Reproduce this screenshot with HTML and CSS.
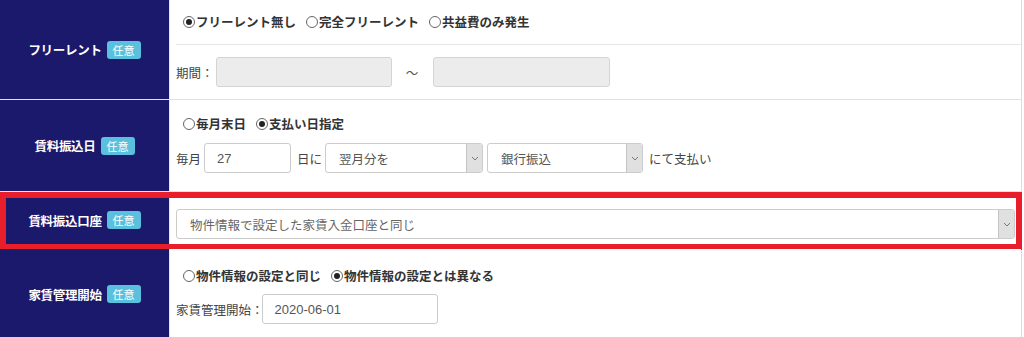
FILE: index.html
```html
<!DOCTYPE html>
<html lang="ja">
<head>
<meta charset="utf-8">
<link rel="stylesheet" href="styles.css">
</head>
<body>
<div class="form">
  <div class="row r1">
    <div class="label"><span class="ltext">フリーレント</span><span class="badge">任意</span></div>
    <div class="content">
      <div class="sub sub-radio">
        <div class="radios">
          <span class="radio"><i class="dot checked"></i>フリーレント無し</span>
          <span class="radio"><i class="dot"></i>完全フリーレント</span>
          <span class="radio"><i class="dot"></i>共益費のみ発生</span>
        </div>
      </div>
      <div class="sub sub-period">
        <span class="txt">期間：</span>
        <span class="field disabled w176"></span>
        <span class="tilde">〜</span>
        <span class="field disabled w177"></span>
      </div>
    </div>
  </div>

  <div class="row r2">
    <div class="label"><span class="ltext">賃料振込日</span><span class="badge">任意</span></div>
    <div class="content stack">
      <div class="radios">
        <span class="radio"><i class="dot"></i>毎月末日</span>
        <span class="radio"><i class="dot checked"></i>支払い日指定</span>
      </div>
      <div class="line">
        <span class="txt">毎月</span>
        <span class="field w87">27</span>
        <span class="txt">日に</span>
        <span class="select w158"><span class="sval">翌月分を</span><span class="arrow"><svg width="8" height="5" viewBox="0 0 8 5"><path d="M1 1l3 3 3-3" fill="none" stroke="#777" stroke-width="1"/></svg></span></span>
        <span class="select w156"><span class="sval">銀行振込</span><span class="arrow"><svg width="8" height="5" viewBox="0 0 8 5"><path d="M1 1l3 3 3-3" fill="none" stroke="#777" stroke-width="1"/></svg></span></span>
        <span class="txt">にて支払い</span>
      </div>
    </div>
  </div>

  <div class="row r3">
    <div class="label"><span class="ltext">賃料振込口座</span><span class="badge">任意</span></div>
    <div class="content single">
      <span class="select wide"><span class="sval">物件情報で設定した家賃入金口座と同じ</span><span class="arrow"><svg width="8" height="5" viewBox="0 0 8 5"><path d="M1 1l3 3 3-3" fill="none" stroke="#777" stroke-width="1"/></svg></span></span>
    </div>
    <div class="highlight"></div>
  </div>

  <div class="row r4">
    <div class="label"><span class="ltext">家賃管理開始</span><span class="badge">任意</span></div>
    <div class="content stack">
      <div class="radios">
        <span class="radio"><i class="dot"></i>物件情報の設定と同じ</span>
        <span class="radio"><i class="dot checked"></i>物件情報の設定とは異なる</span>
      </div>
      <div class="line">
        <span class="txt">家賃管理開始：</span>
        <span class="field w176">2020-06-01</span>
      </div>
    </div>
  </div>
</div>
</body>
</html>
```

FILE: styles.css
```css
* { box-sizing: border-box; }
html, body { margin: 0; padding: 0; background: #fff; }
body {
  font-family: "Noto Sans CJK JP", "Noto Sans", sans-serif;
  font-size: 12.5px;
  color: #333;
  overflow: hidden;
}
.form {
  width: 1022px;
  border-right: 1px solid #dcdcdc;
}
.row {
  position: relative;
  display: grid;
  grid-template-columns: 169px 1fr;
  border-bottom: 1px solid #e2e2e2;
}
.label {
  background: #1b196b;
  color: #fff;
  font-weight: bold;
  display: flex;
  align-items: center;
  justify-content: center;
  gap: 5px;
  letter-spacing: -0.3px;
}
.badge {
  background: #5bc0de;
  color: #fff;
  font-size: 11px;
  font-weight: normal;
  line-height: 18px;
  height: 18px;
  padding: 0 6px;
  border-radius: 3px;
  letter-spacing: 0;
}
.content {
  background: #fff;
  border-left: 1px solid #e4e4e4;
  padding-left: 6px;
}
.r1 { height: 100px; }
.r1 .content { display: flex; flex-direction: column; }
.sub { display: flex; align-items: center; }
.sub-radio { height: 45px; border-bottom: 1px solid #e6e6e6; }
.sub-period { flex: 1; }
.radios {
  display: flex;
  gap: 10px;
  padding-left: 7px;
  font-weight: bold;
  color: #333;
  line-height: 20px;
}
.radio { display: inline-flex; align-items: center; }
.dot {
  display: inline-block;
  width: 12px;
  height: 12px;
  border: 1px solid #666;
  border-radius: 50%;
  margin-right: 1px;
  position: relative;
  background: #fff;
}
.dot.checked::after {
  content: "";
  position: absolute;
  left: 2px;
  top: 2px;
  width: 6px;
  height: 6px;
  border-radius: 50%;
  background: #222;
}
.txt { color: #444; white-space: nowrap; }
.field {
  display: inline-flex;
  align-items: center;
  height: 30px;
  border: 1px solid #ccc;
  border-radius: 3px;
  background: #fff;
  padding-left: 12px;
  color: #555;
  font-family: "Liberation Sans", "Noto Sans CJK JP", sans-serif;
  font-size: 13px;
}
.field.disabled { background: #ececec; border-color: #d5d5d5; }
.sub-period .txt { margin-right: 2px; }
.w176 { width: 176px; }
.w177 { width: 177px; }
.w87 { width: 87px; }
.w158 { width: 158px; }
.w156 { width: 156px; }
.tilde { width: 41px; text-align: center; color: #555; }
.stack { display: flex; flex-direction: column; }
.r2 { height: 92px; }
.r2 .content { padding-top: 14px; }
.r2 .line { margin-top: 9px; }
.line { display: flex; align-items: center; gap: 4px; }
.r2 .line .txt:first-child { margin-right: -1px; }
.r2 .line .w87 + .txt { margin-left: 2px; margin-right: -1px; }
.r2 .line .w156 + .txt { margin-left: 2px; }
.select {
  display: inline-flex;
  align-items: stretch;
  height: 30px;
  border: 1px solid #ccc;
  border-radius: 3px;
  background: #fff;
  overflow: hidden;
  color: #555;
}
.sval { flex: 1; display: flex; align-items: center; padding-left: 13px; white-space: nowrap; }
.arrow {
  width: 16px;
  background: #e0e0e0;
  border-left: 1px solid #c4c4c4;
  display: flex;
  align-items: center;
  justify-content: center;
}
.r3 { height: 57px; }
.r3 .content { display: flex; align-items: flex-start; padding-top: 17px; padding-right: 6px; }
.wide { width: 839px; }
.wide .sval { color: #666; }
.highlight {
  position: absolute;
  left: 0;
  top: 0;
  width: 1022px;
  height: 58px;
  border: 6px solid #e81f2b;
  pointer-events: none;
}
.r4 { height: 90px; border-bottom: 0; }
.r4 .content { padding-top: 17px; }
.r4 .line { margin-top: 8px; gap: 0; }
.r4 .line .field { margin-left: -2px; }
```
